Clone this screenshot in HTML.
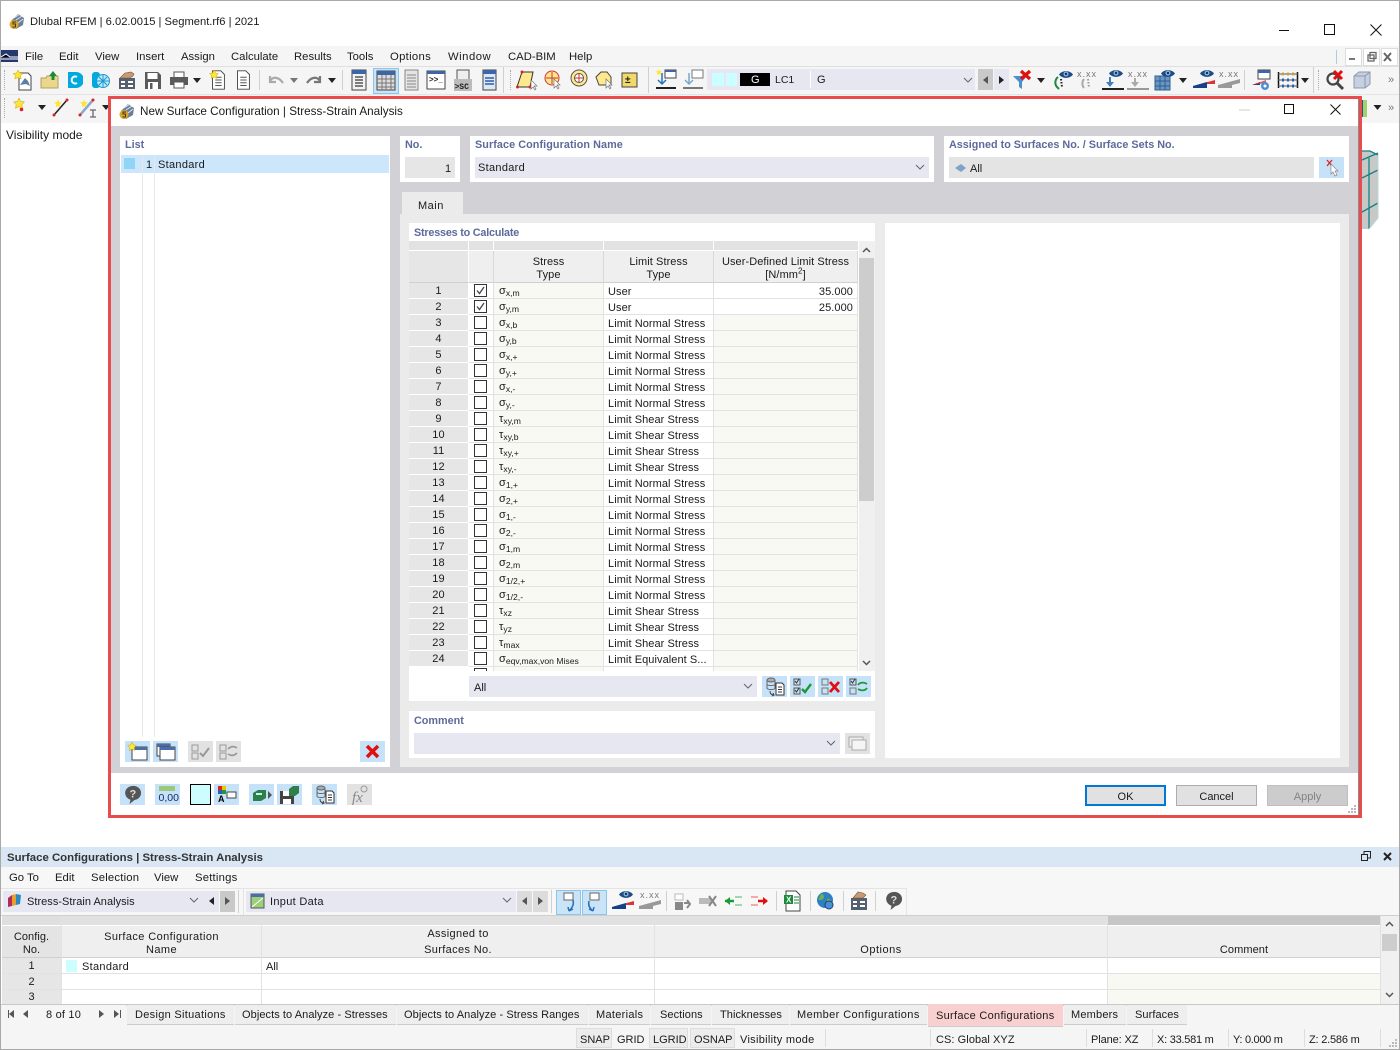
<!DOCTYPE html>
<html><head><meta charset="utf-8"><title>Dlubal RFEM</title>
<style>
html,body{margin:0;padding:0;background:#fff}
#p{position:relative;width:1400px;height:1050px;overflow:hidden;background:#fff;font:11.3px "Liberation Sans",sans-serif;color:#1a1a1a}
#p div,#p span.t,#p svg.i{position:absolute}
.t{white-space:nowrap;line-height:14px}
.lb{color:#5b6b9a;font-weight:bold;font-size:10.8px}
.sel{background:#e6e7f1}
.btn{background:#c6e2f8;width:25px;height:21px}
.dis{background:#e2e2e2;width:25px;height:21px}
.sep{width:1px;background:#d0d0d0}
.bx{background:#e1e1e1;border:1px solid #adadad;box-sizing:border-box;text-align:center;line-height:22px}
table{border-collapse:separate;border-spacing:0;table-layout:fixed;position:absolute}
td{padding:2px 0 0;height:13px;border-right:1px solid #e2e2e2;border-bottom:1px solid #e2e2e2;font-size:11px;line-height:13px;white-space:nowrap;overflow:hidden;letter-spacing:.07px;box-sizing:content-box}
td.n{background:#e6e6e6;text-align:center;border-right:1px solid #fff;border-bottom:1px solid #fff;padding-top:1px;height:14px;line-height:14px}
td.c{background:#fff;position:relative}
td.s{background:#f8f9f2;padding-left:5px}
td.l{background:#fff;padding-left:4px;padding-top:4px;height:11px;line-height:11px}
td.u{background:#f8f9f2;text-align:right;padding-right:4px;padding-top:4px;height:11px;line-height:11px}
td.w{background:#fff}
sub{font-size:8.6px;vertical-align:-2px;line-height:0;letter-spacing:0}
i.c{display:block;position:absolute;left:5px;top:1px;width:11px;height:11px;border:1px solid #333;background:#fff}
th{padding:4px 0 0;font-weight:normal;font-size:11px;line-height:13px;letter-spacing:.07px;background:#efefef;border-right:1px solid #d9d9d9;border-bottom:1px solid #d0d0d0;text-align:center;height:27px;box-sizing:content-box}
</style></head><body><div id="p">
<svg width="0" height="0" style="position:absolute"><defs>
<symbol id="logo" viewBox="0 0 18 18"><path d="M3 9l7-7 6 4-1 7-7 4z" fill="#6b7d98"/><path d="M6 6l6-4M8 8l6-4M10 11l5-4" stroke="#dfe6ee" stroke-width="1"/><circle cx="6" cy="12.5" r="4.5" fill="#d9a531"/><path d="M8 10H5v2h2.500v3H4.500" fill="none" stroke="#4a3a10" stroke-width="1"/></symbol>
<symbol id="tbl" viewBox="0 0 20 24"><rect x="3" y="2" width="14" height="20" fill="#f2f2f2" stroke="#444"/><rect x="3" y="2" width="14" height="4" fill="#3d66a8"/><path d="M6 9h8M6 12h8M6 15h8M6 18h8" stroke="#555" stroke-width="1.500"/></symbol>
<symbol id="doc" viewBox="0 0 20 24"><path d="M4 2h9l4 4v16H4z" fill="#fff" stroke="#444"/><path d="M7 9h7M7 12h7M7 15h7M7 18h7" stroke="#555"/></symbol>
<symbol id="eye" viewBox="0 0 14 9"><path d="M0 4.500C3 0 11 0 14 4.500 11 9 3 9 0 4.500z" fill="#1e4d86"/><circle cx="7" cy="4" r="2.500" fill="#8fb6dc"/><circle cx="7" cy="4" r="1.200" fill="#12305a"/></symbol>
<symbol id="ld" viewBox="0 0 26 24"><svg x="9" y="1" width="14" height="9"><use href="#eye"/></svg><path d="M10 9v8" stroke="#3d7fc0" stroke-width="2"/><path d="M6 14h8l-4 5z" fill="#3d7fc0"/><path d="M2 21h22" stroke="#222" stroke-width="2"/></symbol>
<symbol id="xxx" viewBox="0 0 26 24"><text x="3" y="9" font-size="9" letter-spacing="1" fill="#777" font-family="Liberation Sans">x.xx</text><path d="M10 10v7" stroke="#aaa" stroke-width="2"/><path d="M6 14h8l-4 5z" fill="#aaa"/><path d="M2 21h22" stroke="#999" stroke-width="2"/></symbol>
<symbol id="lm" viewBox="0 0 26 24"><svg x="9" y="1" width="14" height="9"><use href="#eye"/></svg><path d="M2 18l22-6v4H16z" fill="#d33"/><path d="M2 18l14-4v6H2z" fill="#15408a"/></symbol>
<symbol id="lx" viewBox="0 0 26 24"><text x="3" y="9" font-size="9" letter-spacing="1" fill="#777" font-family="Liberation Sans">x.xx</text><path d="M2 17l22-6v4l-8 2v3H2z" fill="#999"/></symbol>
<symbol id="cur" viewBox="0 0 26 24"><path d="M3 19L8 4h11l-3 15z" fill="#ffe98c" stroke="#333"/><circle cx="3.500" cy="19" r="1.500" fill="#d22"/><circle cx="16" cy="19" r="1.500" fill="#d22"/><circle cx="8" cy="4" r="1.500" fill="#d22"/><path d="M17 12l0 9 2-2 2 3 1-1-2-3h3z" fill="#fff" stroke="#777" stroke-width=".7"/></symbol>
<symbol id="dbdoc" viewBox="0 0 25 21"><ellipse cx="9" cy="4" rx="4" ry="2" fill="#aaa" stroke="#666"/><path d="M5 4v8c0 2 8 2 8 0V4M5 8c0 2 8 2 8 0" fill="none" stroke="#666"/><path d="M8 15c0 3 2 4 4 4l-1-2m1 2l-2 1" fill="none" stroke="#444"/><path d="M14 7h6l2 2v10h-8z" fill="#fff" stroke="#333"/><path d="M16 11h4M16 13.500h4M16 16h4" stroke="#333"/></symbol>
<symbol id="win" viewBox="0 0 25 21"><rect x="7" y="6" width="15" height="13" fill="#fff" stroke="#444"/><rect x="7" y="6" width="15" height="3" fill="#4a6fa8"/></symbol>
<symbol id="help" viewBox="0 0 25 21"><path d="M12.500 2a7.500 7 0 0 1 2 14l-5 4 1-4.300A7.500 7 0 0 1 12.500 2z" fill="#555"/><text x="9.500" y="13.500" font-size="11" font-weight="bold" fill="#ddd" font-family="Liberation Sans">?</text></symbol>
<symbol id="chv" viewBox="0 0 10 6"><path d="M1 1l4 4 4-4" fill="none" stroke="#666"/></symbol>
<symbol id="da" viewBox="0 0 8 5"><path d="M0 0h8L4 5z" fill="#222"/></symbol>
<symbol id="la" viewBox="0 0 5 8"><path d="M5 0v8L0 4z" fill="#222"/></symbol>
<symbol id="ra" viewBox="0 0 5 8"><path d="M0 0v8l5-4z" fill="#222"/></symbol>
</defs></svg>

<!-- window frame -->
<div style="left:0;top:0;width:1400px;height:1px;background:#a9a9a9"></div>
<div style="left:0;top:0;width:1px;height:1050px;background:#a9a9a9"></div>
<div style="left:1399px;top:0;width:1px;height:1050px;background:#a9a9a9"></div>
<div style="left:0;top:1049px;width:1400px;height:1px;background:#a9a9a9"></div>

<!-- title -->
<svg class="i" style="left:8px;top:12px" width="18" height="18"><use href="#logo"/></svg>
<span class="t" style="left:30px;top:15px;font-size:11.2px">Dlubal RFEM | 6.02.0015 | Segment.rf6 | 2021</span>
<svg class="i" style="left:1278px;top:24px" width="14" height="14"><path d="M1 6.500h10" stroke="#111"/></svg>
<svg class="i" style="left:1324px;top:24px" width="12" height="12"><rect x=".5" y=".5" width="10" height="10" fill="none" stroke="#111"/></svg>
<svg class="i" style="left:1370px;top:24px" width="12" height="12"><path d="M.5.500l11 11M11.500.500l-11 11" stroke="#111"/></svg>

<!-- menu -->
<div style="left:1px;top:46px;width:1398px;height:20px;background:#f5f5f5"></div>
<svg class="i" style="left:1px;top:50px" width="17" height="12"><rect width="17" height="12" fill="#24386e"/><path d="M0 7l5-3 4 3h8M0 9h17" stroke="#fff"/></svg>
<span class="t" style="left:25px;top:50px">File</span>
<span class="t" style="left:59px;top:50px">Edit</span>
<span class="t" style="left:95px;top:50px">View</span>
<span class="t" style="left:136px;top:50px">Insert</span>
<span class="t" style="left:181px;top:50px">Assign</span>
<span class="t" style="left:231px;top:50px">Calculate</span>
<span class="t" style="left:294px;top:50px">Results</span>
<span class="t" style="left:347px;top:50px">Tools</span>
<span class="t" style="left:390px;top:50px;letter-spacing:.3px">Options</span>
<span class="t" style="left:448px;top:50px;letter-spacing:.5px">Window</span>
<span class="t" style="left:508px;top:50px">CAD-BIM</span>
<span class="t" style="left:569px;top:50px">Help</span>
<div style="left:1336px;top:50px;width:1px;height:14px;background:#a7cdea"></div>
<div style="left:1345px;top:48px;width:15px;height:16px;background:#fff;border:1px solid #ddd"></div>
<div style="left:1363px;top:48px;width:15px;height:16px;background:#fff;border:1px solid #ddd"></div>
<div style="left:1381px;top:48px;width:15px;height:16px;background:#fff;border:1px solid #ddd"></div>
<svg class="i" style="left:1346px;top:49px" width="50" height="16"><path d="M3 10h6" stroke="#777" stroke-width="2"/><rect x="22" y="6" width="6" height="6" fill="none" stroke="#666" stroke-width="1.300"/><rect x="24" y="3.500" width="6" height="6" fill="none" stroke="#666" stroke-width="1.300"/><path d="M38 4l7 8M45 4l-7 8" stroke="#666" stroke-width="2"/></svg>

<!-- toolbar 1 -->
<div style="left:1px;top:66px;width:1398px;height:57px;background:#f5f5f5"></div>
<div style="left:1px;top:66px;width:1398px;height:1px;background:#e0e0e0"></div>
<div style="left:1px;top:94px;width:1398px;height:1px;background:#e4e4e4"></div>
<div style="left:4px;top:70px;width:1px;height:20px;border-left:1px dotted #aaa"></div>
<svg class="i" style="left:12px;top:69px" width="22" height="22"><path d="M7 4h9l3 3v14H7z" fill="#fff" stroke="#444"/><path d="M8 16l5-7 3 3 2 5-4-2z" fill="#5b7ea8"/><path d="M6 1l1.500 3 3.500.5-2.500 2 .7 3.500L6 8.500 2.800 10l.7-3.500L1 4.500 4.500 4z" fill="#ffe53a" stroke="#c9a800" stroke-width=".5"/></svg>
<svg class="i" style="left:40px;top:70px" width="20" height="20"><path d="M1 8h5l1-2h11v12H1z" fill="#e9d78e" stroke="#b5a15a"/><path d="M13 1l4 5h-2.500v4h-3V6H9z" fill="#1b8a3a"/></svg>
<svg class="i" style="left:65px;top:70px" width="18" height="20"><path d="M3 2h8a8 8 0 0 1 0 16H3z" fill="#00a9e0"/><path d="M12 7a3.500 3.500 0 1 0 0 6" fill="none" stroke="#fff" stroke-width="2"/></svg>
<svg class="i" style="left:91px;top:70px" width="20" height="20"><rect x="1" y="2" width="8" height="16" rx="3" fill="#00a9e0"/><circle cx="12" cy="11" r="6.500" fill="#bfe9f7" stroke="#1a9bd0"/><path d="M12 5v12M6 11h12M8 7l8 8M16 7l-8 8" stroke="#1a9bd0"/></svg>
<svg class="i" style="left:117px;top:70px" width="20" height="20"><rect x="2" y="8" width="16" height="11" fill="#55606e"/><path d="M4 12h4M11 12h5M4 16h4M11 16h5" stroke="#fff" stroke-width="2"/><path d="M3 8l5-5 6-1 3 2-1 2-3 2z" fill="#c79a74" stroke="#7a5a3a" stroke-width=".6"/></svg>
<svg class="i" style="left:144px;top:70px" width="18" height="20"><path d="M1 2h13l3 3v14H1z" fill="#5a5a5a"/><rect x="3.500" y="3" width="10" height="6" fill="#fff"/><rect x="4" y="12" width="10" height="7" fill="#fff"/><rect x="6" y="13" width="2.500" height="6" fill="#5a5a5a"/></svg>
<svg class="i" style="left:169px;top:71px" width="20" height="18"><rect x="5" y="1" width="10" height="6" fill="#fff" stroke="#555"/><rect x="1" y="6" width="18" height="8" fill="#5a5a5a"/><rect x="5" y="11" width="10" height="6" fill="#fff" stroke="#555"/></svg>
<svg class="i" style="left:193px;top:78px" width="8" height="5"><use href="#da"/></svg>
<svg class="i" style="left:208px;top:69px" width="20" height="22"><use href="#doc"/><path d="M6 1l1.500 3 3 .5-2 2 .5 3L6 8 3 9.500l.5-3-2-2 3-.5z" fill="#ffe53a" stroke="#c9a800" stroke-width=".5"/></svg>
<svg class="i" style="left:233px;top:69px" width="20" height="22"><use href="#doc"/></svg>
<div class="sep" style="left:259px;top:70px;height:20px"></div>
<svg class="i" style="left:267px;top:73px" width="18" height="14"><path d="M3 3v6h6M3 8c3-5 9-4 13 2" fill="none" stroke="#aaa" stroke-width="2.200"/></svg>
<svg class="i" style="left:290px;top:78px" width="8" height="5"><path d="M0 0h8L4 5z" fill="#777"/></svg>
<svg class="i" style="left:305px;top:73px" width="18" height="14"><path d="M15 3v6H9M15 8c-3-5-9-4-13 2" fill="none" stroke="#777" stroke-width="2.200"/></svg>
<svg class="i" style="left:328px;top:78px" width="8" height="5"><use href="#da"/></svg>
<div class="sep" style="left:342px;top:70px;height:20px"></div>
<svg class="i" style="left:349px;top:68px" width="20" height="24"><use href="#tbl"/></svg>
<div style="left:373px;top:68px;width:24px;height:24px;background:#c9e3f7;border:1px solid #8fc4ea"></div>
<svg class="i" style="left:376px;top:70px" width="20" height="22"><rect x="1" y="1" width="18" height="19" fill="#ddd" stroke="#444"/><rect x="1" y="1" width="18" height="4" fill="#3d66a8"/><path d="M1 9h18M1 13h18M1 17h18M6 5v15M10 5v15M15 5v15" stroke="#777"/></svg>
<svg class="i" style="left:401px;top:68px" width="20" height="24"><rect x="4" y="2" width="13" height="20" fill="#e4e4e4" stroke="#888"/><path d="M6 7h9M6 10h9M6 13h9M6 16h9M6 19h9" stroke="#888"/></svg>
<svg class="i" style="left:426px;top:70px" width="20" height="20"><rect x="1" y="1" width="18" height="18" fill="#fff" stroke="#444"/><rect x="1" y="1" width="18" height="3" fill="#3d66a8"/><text x="3" y="12" font-size="8" font-weight="bold" fill="#222" font-family="Liberation Sans">&gt;&gt;_</text></svg>
<svg class="i" style="left:453px;top:68px" width="20" height="24"><rect x="4" y="2" width="12" height="12" fill="#eee" stroke="#555"/><rect x="1" y="11" width="18" height="12" fill="#bbb"/><text x="1.500" y="21" font-size="8" font-weight="bold" fill="#222" font-family="Liberation Mono">&gt;SC</text></svg>
<svg class="i" style="left:479px;top:68px" width="20" height="24"><rect x="4" y="2" width="13" height="20" fill="#dce8f6" stroke="#444"/><rect x="4" y="2" width="13" height="4" fill="#3d66a8"/><path d="M6 10h9M6 13h9M6 16h9" stroke="#2a5fa8" stroke-width="1.500"/></svg>
<div class="sep" style="left:503px;top:67px;height:26px"></div>
<div style="left:510px;top:70px;width:1px;height:20px;border-left:1px dotted #aaa"></div>
<svg class="i" style="left:514px;top:68px" width="26" height="24"><use href="#cur"/></svg>
<svg class="i" style="left:542px;top:69px" width="22" height="22"><circle cx="10" cy="9" r="7" fill="#ffe98c" stroke="#c33"/><path d="M10 3v12M4 9h12" stroke="#c33"/><path d="M12 10l0 9 2-2 2 3 1-1-2-3h3z" fill="#fff" stroke="#777" stroke-width=".7"/></svg>
<svg class="i" style="left:568px;top:69px" width="22" height="22"><circle cx="11" cy="9" r="8" fill="#ffe98c" stroke="#555"/><circle cx="11" cy="9" r="4.500" fill="#fff" stroke="#555"/><path d="M11 5v8M7 9h8" stroke="#c33"/></svg>
<svg class="i" style="left:594px;top:69px" width="22" height="22"><path d="M2 8l5-5h6l4 5v8H5z" fill="#ffe98c" stroke="#444"/><path d="M12 10l0 9 2-2 2 3 1-1-2-3h3z" fill="#fff" stroke="#777" stroke-width=".7"/></svg>
<svg class="i" style="left:620px;top:71px" width="20" height="20"><rect x="2" y="2" width="15" height="14" fill="#f0d96a" stroke="#444"/><text x="5" y="12" font-size="10" font-weight="bold" fill="#222" font-family="Liberation Sans">±</text></svg>
<div class="sep" style="left:648px;top:67px;height:26px"></div>
<svg class="i" style="left:654px;top:68px" width="26" height="24"><rect x="11" y="2" width="11" height="8" fill="#fff" stroke="#444"/><rect x="11" y="2" width="11" height="2" fill="#3d66a8"/><path d="M8 5v11M4 12l4 4 4-4" fill="none" stroke="#2a6fb8" stroke-width="1.500"/><path d="M2 20h20" stroke="#222" stroke-width="2"/><path d="M5 1l1 2 2 .3-1.500 1.500.4 2L5 6 3 7l.4-2L2 3.300 4 3z" fill="#ffe53a"/></svg>
<svg class="i" style="left:681px;top:68px" width="26" height="24"><rect x="11" y="2" width="11" height="8" fill="#fff" stroke="#777"/><path d="M8 5v11M4 12l4 4 4-4" fill="none" stroke="#7aa6d0" stroke-width="1.500"/><path d="M2 20h20" stroke="#777" stroke-width="2"/></svg>
<div class="sel" style="left:707px;top:69px;width:268px;height:21px"></div>
<div style="left:712px;top:73px;width:12px;height:13px;background:#ccfeff"></div>
<div style="left:726px;top:73px;width:11px;height:13px;background:#ccfeff"></div>
<div style="left:740px;top:73px;width:30px;height:13px;background:#000"></div>
<span class="t" style="left:751px;top:73px;color:#fff;font-size:11px">G</span>
<span class="t" style="left:775px;top:73px;font-size:10.5px">LC1</span>
<div style="left:810px;top:71px;width:1px;height:17px;background:#fff"></div>
<span class="t" style="left:817px;top:73px;font-size:11px">G</span>
<svg class="i" style="left:963px;top:77px" width="10" height="6"><use href="#chv"/></svg>
<div style="left:978px;top:69px;width:15px;height:21px;background:#c9c9c9"></div>
<div style="left:994px;top:69px;width:15px;height:21px;background:#e6e7f1"></div>
<svg class="i" style="left:983px;top:76px" width="5" height="8"><path d="M5 0v8L0 4z" fill="#555"/></svg>
<svg class="i" style="left:999px;top:76px" width="5" height="8"><use href="#ra"/></svg>
<svg class="i" style="left:1012px;top:69px" width="22" height="22"><path d="M1 7h14l-5 6v7l-3-2v-5z" fill="#4a90cf"/><path d="M9 2l9 8M18 2l-9 8" stroke="#e01010" stroke-width="3.200"/></svg>
<svg class="i" style="left:1037px;top:78px" width="8" height="5"><use href="#da"/></svg>
<svg class="i" style="left:1050px;top:68px" width="24" height="24"><svg x="9" y="2" width="14" height="9"><use href="#eye"/></svg><path d="M8 9a7 7 0 0 0-1 10l2 2" fill="none" stroke="#1b8a3a" stroke-width="2"/><path d="M11 11l1 8" stroke="#222" stroke-dasharray="1.500 1.500" stroke-width="2"/></svg>
<svg class="i" style="left:1075px;top:68px" width="26" height="24"><text x="2" y="9" font-size="9" letter-spacing="1" fill="#777" font-family="Liberation Sans">x.xx</text><path d="M9 11a7 7 0 0 0 0 9" fill="none" stroke="#aaa" stroke-width="2"/><path d="M13 11l1 9" stroke="#999" stroke-dasharray="1.500 1.500" stroke-width="2"/></svg>
<svg class="i" style="left:1100px;top:68px" width="26" height="24"><use href="#ld"/></svg>
<svg class="i" style="left:1125px;top:68px" width="26" height="24"><use href="#xxx"/></svg>
<svg class="i" style="left:1152px;top:68px" width="24" height="24"><rect x="3" y="8" width="15" height="14" fill="#6a96c4" stroke="#2f5f90"/><path d="M3 13h15M3 18h15M8 8v14M13 8v14" stroke="#2f5f90"/><svg x="9" y="1" width="14" height="9"><use href="#eye"/></svg></svg>
<svg class="i" style="left:1179px;top:78px" width="8" height="5"><use href="#da"/></svg>
<svg class="i" style="left:1191px;top:68px" width="26" height="24"><use href="#lm"/></svg>
<svg class="i" style="left:1216px;top:68px" width="26" height="24"><use href="#lx"/></svg>
<div class="sep" style="left:1244px;top:70px;height:20px"></div>
<svg class="i" style="left:1250px;top:68px" width="24" height="24"><rect x="8" y="2" width="12" height="9" fill="#fff" stroke="#444"/><rect x="8" y="2" width="12" height="3" fill="#3d66a8"/><path d="M2 17l8-3v3z" fill="#15408a"/><path d="M2 17l14-5v3z" fill="#d33" opacity=".8"/><circle cx="15" cy="18" r="4" fill="#4a90d9"/><circle cx="15" cy="18" r="1.500" fill="#fff"/></svg>
<svg class="i" style="left:1277px;top:70px" width="24" height="20"><path d="M1.500 2v16M20.500 2v16" stroke="#111" stroke-width="1.500"/><path d="M1 4h20M1 10h20M1 16h20" stroke="#555"/><path d="M5 4h2M10 4h2M15 4h2" stroke="#c9a23a" stroke-width="3"/><path d="M5 10h2M10 10h2M15 10h2M5 16h2M10 16h2M15 16h2" stroke="#2a5fb8" stroke-width="3"/></svg>
<svg class="i" style="left:1301px;top:78px" width="8" height="5"><use href="#da"/></svg>
<div class="sep" style="left:1313px;top:67px;height:26px"></div>
<div style="left:1318px;top:70px;width:1px;height:20px;border-left:1px dotted #aaa"></div>
<svg class="i" style="left:1325px;top:69px" width="22" height="22"><circle cx="8" cy="10" r="5.500" fill="none" stroke="#444" stroke-width="2.200"/><path d="M12 14l6 6" stroke="#444" stroke-width="3"/><path d="M9 2l8 8M17 2l-8 8" stroke="#e01010" stroke-width="3"/></svg>
<svg class="i" style="left:1352px;top:70px" width="20" height="20"><path d="M2 6l5-4h11v12l-5 4H2z" fill="#c6d0e0" stroke="#8a9ab0"/><path d="M2 6h11v12M13 6l5-4" fill="none" stroke="#8a9ab0"/></svg>
<span class="t" style="left:1388px;top:73px;color:#777;font-size:11px">»</span>

<!-- toolbar 2 -->
<div style="left:4px;top:98px;width:1px;height:20px;border-left:1px dotted #aaa"></div>
<svg class="i" style="left:12px;top:97px" width="16" height="18"><path d="M7 1l1.700 3.500 3.800.5-2.700 2.600.7 3.800L7 9.600l-3.500 1.800.7-3.800L1.500 5l3.800-.5z" fill="#ffe53a" stroke="#b89a00" stroke-width=".5"/><circle cx="9.500" cy="12.500" r="1.800" fill="#d22"/></svg>
<svg class="i" style="left:38px;top:105px" width="8" height="5"><use href="#da"/></svg>
<svg class="i" style="left:51px;top:97px" width="20" height="20"><path d="M3 18L16 3" stroke="#222" stroke-width="1.500"/><circle cx="3" cy="18" r="1.500" fill="#d22"/><circle cx="16" cy="3" r="1.500" fill="#d22"/><path d="M7 2l1 3 3 .4-2.300 2 .6 3L7 9l-2.300 1.400.6-3L3 5.400 6 5z" fill="#ffe53a"/></svg>
<svg class="i" style="left:77px;top:97px" width="22" height="22"><path d="M3 18L16 3" stroke="#8aa8c8" stroke-width="2.500"/><circle cx="3" cy="18" r="1.500" fill="#d22"/><circle cx="16" cy="3" r="1.500" fill="#d22"/><path d="M7 2l1 3 3 .4-2.300 2 .6 3L7 9l-2.300 1.400.6-3L3 5.400 6 5z" fill="#ffe53a"/><path d="M13 13h6M16 13v7M13 20h6" stroke="#667" stroke-width="1.300"/></svg>
<svg class="i" style="left:102px;top:105px" width="8" height="5"><use href="#da"/></svg>
<span class="t" style="left:6px;top:128px;font-size:12px">Visibility mode</span>
<div style="left:1361px;top:100px;width:6px;height:17px;background:#9ed46a;border-left:2px solid #2f4f90;box-sizing:border-box"></div>
<svg class="i" style="left:1373px;top:105px" width="9" height="5"><use href="#da"/></svg>
<span class="t" style="left:1388px;top:101px;color:#777;font-size:11px">»</span>

<!-- 3D model piece -->
<svg class="i" style="left:1362px;top:150px" width="20" height="82"><path d="M0 1h8l8 4v63L7 79H0z" fill="#c7c9c9"/><path d="M0 1h8l8 4M0 10l16-7M0 28l16-8M0 62l16-9M7 8v71" fill="none" stroke="#16807f" stroke-width="1.300"/><path d="M16 5v63L7 79" fill="none" stroke="#b9d6d6"/></svg>

<!-- Dialog -->
<div style="left:108px;top:96px;width:1254px;height:722px;box-sizing:border-box;border:3px solid #e84c4c;background:#fff"></div>
<div style="left:1358px;top:99px;width:1px;height:716px;background:#8a8a8a"></div>
<svg class="i" style="left:118px;top:102px" width="18" height="18"><use href="#logo"/></svg>
<span class="t" style="left:140px;top:105px;font-size:11.7px">New Surface Configuration | Stress-Strain Analysis</span>
<svg class="i" style="left:1239px;top:108px" width="12" height="4"><path d="M0 2h11" stroke="#ccc"/></svg>
<svg class="i" style="left:1284px;top:104px" width="11" height="11"><rect x=".5" y=".5" width="9" height="9" fill="none" stroke="#111"/></svg>
<svg class="i" style="left:1330px;top:104px" width="11" height="11"><path d="M.5.500l10 10M10.500.500l-10 10" stroke="#111"/></svg>
<div style="left:111px;top:126px;width:1247px;height:647px;background:#d1d1d6"></div>

<!-- List panel -->
<div style="left:120px;top:136px;width:270px;height:631px;background:#fff"></div>
<span class="t lb" style="left:125px;top:138px">List</span>
<div style="left:121px;top:155px;width:268px;height:18px;background:#cce6fb"></div>
<div style="left:124px;top:158px;width:11px;height:11px;background:#90d5f5"></div>
<div style="left:142px;top:155px;width:1px;height:582px;background:#e8e8e8"></div>
<div style="left:154px;top:155px;width:1px;height:582px;background:#e8e8e8"></div>
<span class="t" style="left:146px;top:158px;font-size:11px">1</span>
<span class="t" style="left:158px;top:158px;font-size:11px;letter-spacing:.3px">Standard</span>
<div class="btn" style="left:125px;top:741px"></div>
<svg class="i" style="left:125px;top:741px" width="25" height="21"><use href="#win"/><path d="M7 1l1.500 3 3 .4-2.200 2.200.5 3L7 8.200 4.300 9.600l.5-3L2.500 4.400l3-.4z" fill="#ffe53a" stroke="#b89a00" stroke-width=".4"/></svg>
<div class="btn" style="left:153px;top:741px"></div>
<svg class="i" style="left:153px;top:741px" width="25" height="21"><rect x="4" y="3" width="13" height="12" fill="#fff" stroke="#444"/><rect x="4" y="3" width="13" height="3" fill="#4a6fa8"/><use href="#win"/></svg>
<div class="dis" style="left:188px;top:741px"></div>
<svg class="i" style="left:188px;top:741px" width="25" height="21"><rect x="4" y="4" width="6" height="6" fill="none" stroke="#999"/><rect x="4" y="12" width="6" height="6" fill="none" stroke="#999"/><path d="M12 12l3 3 6-8" fill="none" stroke="#999" stroke-width="2"/></svg>
<div class="dis" style="left:216px;top:741px"></div>
<svg class="i" style="left:216px;top:741px" width="25" height="21"><rect x="4" y="4" width="6" height="6" fill="none" stroke="#999"/><rect x="4" y="12" width="6" height="6" fill="none" stroke="#999"/><path d="M12 8c3-3 6-3 9-1M21 12c-3 3-6 3-9 1" fill="none" stroke="#999" stroke-width="1.600"/></svg>
<div class="btn" style="left:360px;top:741px"></div>
<svg class="i" style="left:360px;top:741px" width="25" height="21"><path d="M7 5l11 11M18 5L7 16" stroke="#e01010" stroke-width="3.500"/></svg>

<!-- No -->
<div style="left:400px;top:136px;width:60px;height:46px;background:#fff"></div>
<span class="t lb" style="left:405px;top:138px">No.</span>
<div style="left:405px;top:157px;width:50px;height:21px;background:#e6e6e6"></div>
<span class="t" style="left:445px;top:162px;font-size:11px">1</span>
<!-- Name -->
<div style="left:470px;top:136px;width:464px;height:46px;background:#fff"></div>
<span class="t lb" style="left:475px;top:138px;letter-spacing:.08px">Surface Configuration Name</span>
<div class="sel" style="left:475px;top:157px;width:454px;height:21px"></div>
<span class="t" style="left:478px;top:161px;font-size:11px;letter-spacing:.3px">Standard</span>
<svg class="i" style="left:915px;top:164px" width="10" height="6"><use href="#chv"/></svg>
<!-- Assigned -->
<div style="left:944px;top:136px;width:405px;height:46px;background:#fff"></div>
<span class="t lb" style="left:949px;top:138px">Assigned to Surfaces No. / Surface Sets No.</span>
<div style="left:949px;top:157px;width:365px;height:21px;background:#e4e4e4"></div>
<svg class="i" style="left:954px;top:163px" width="13" height="10"><path d="M1 5l6-4 5 4-5 4z" fill="#7da4c8"/></svg>
<span class="t" style="left:970px;top:162px;font-size:11px">All</span>
<div class="btn" style="left:1319px;top:157px"></div>
<svg class="i" style="left:1319px;top:157px" width="25" height="21"><path d="M8 3l5 6M13 3L8 9" stroke="#d22" stroke-width="1.300"/><path d="M12 7v10l2-2 2 4 2-1-2-4h3z" fill="#fff" stroke="#888" stroke-width=".7"/></svg>

<!-- Main tab area -->
<div style="left:402px;top:192px;width:61px;height:22px;background:#ebebeb"></div>
<span class="t" style="left:418px;top:199px;font-size:11px;letter-spacing:.5px">Main</span>
<div style="left:400px;top:214px;width:949px;height:553px;background:#ebebeb"></div>

<!-- Stress panel -->
<div style="left:409px;top:223px;width:466px;height:478px;background:#fff"></div>
<span class="t lb" style="left:414px;top:226px;letter-spacing:-.2px">Stresses to Calculate</span>
<div style="left:409px;top:241px;width:449px;height:430px;overflow:hidden">
<div style="left:0;top:0;width:59px;height:9px;background:#e2e2e2"></div>
<div style="left:60px;top:0;width:24px;height:9px;background:#e2e2e2"></div>
<div style="left:85px;top:0;width:109px;height:9px;background:#e2e2e2"></div>
<div style="left:195px;top:0;width:109px;height:9px;background:#e2e2e2"></div>
<div style="left:305px;top:0;width:144px;height:9px;background:#e2e2e2"></div>
<table style="left:0;top:10px;width:449px">
<colgroup><col style="width:60px"><col style="width:25px"><col style="width:110px"><col style="width:110px"><col style="width:144px"></colgroup>
<tr><th style="background:#e6e6e6;border-right:1px solid #fff"></th><th></th><th>Stress<br>Type</th><th>Limit Stress<br>Type</th><th>User-Defined Limit Stress<br>[N/mm<sup style="font-size:8px;line-height:0">2</sup>]</th></tr>
<tr><td class="n">1</td><td class="c"><i class="c"><svg width="11" height="11" style="display:block"><path d="M2 5.500l2.500 3L9 2" fill="none" stroke="#444" stroke-width="1.300"/></svg></i></td><td class="s">σ<sub>x,m</sub></td><td class="l">User</td><td class="u" style="background:#fff">35.000</td></tr>
<tr><td class="n">2</td><td class="c"><i class="c"><svg width="11" height="11" style="display:block"><path d="M2 5.500l2.500 3L9 2" fill="none" stroke="#444" stroke-width="1.300"/></svg></i></td><td class="s">σ<sub>y,m</sub></td><td class="l">User</td><td class="u" style="background:#fff">25.000</td></tr>
<tr><td class="n">3</td><td class="c"><i class="c"></i></td><td class="s">σ<sub>x,b</sub></td><td class="l">Limit Normal Stress</td><td class="u"></td></tr>
<tr><td class="n">4</td><td class="c"><i class="c"></i></td><td class="s">σ<sub>y,b</sub></td><td class="l">Limit Normal Stress</td><td class="u"></td></tr>
<tr><td class="n">5</td><td class="c"><i class="c"></i></td><td class="s">σ<sub>x,+</sub></td><td class="l">Limit Normal Stress</td><td class="u"></td></tr>
<tr><td class="n">6</td><td class="c"><i class="c"></i></td><td class="s">σ<sub>y,+</sub></td><td class="l">Limit Normal Stress</td><td class="u"></td></tr>
<tr><td class="n">7</td><td class="c"><i class="c"></i></td><td class="s">σ<sub>x,-</sub></td><td class="l">Limit Normal Stress</td><td class="u"></td></tr>
<tr><td class="n">8</td><td class="c"><i class="c"></i></td><td class="s">σ<sub>y,-</sub></td><td class="l">Limit Normal Stress</td><td class="u"></td></tr>
<tr><td class="n">9</td><td class="c"><i class="c"></i></td><td class="s">τ<sub>xy,m</sub></td><td class="l">Limit Shear Stress</td><td class="u"></td></tr>
<tr><td class="n">10</td><td class="c"><i class="c"></i></td><td class="s">τ<sub>xy,b</sub></td><td class="l">Limit Shear Stress</td><td class="u"></td></tr>
<tr><td class="n">11</td><td class="c"><i class="c"></i></td><td class="s">τ<sub>xy,+</sub></td><td class="l">Limit Shear Stress</td><td class="u"></td></tr>
<tr><td class="n">12</td><td class="c"><i class="c"></i></td><td class="s">τ<sub>xy,-</sub></td><td class="l">Limit Shear Stress</td><td class="u"></td></tr>
<tr><td class="n">13</td><td class="c"><i class="c"></i></td><td class="s">σ<sub>1,+</sub></td><td class="l">Limit Normal Stress</td><td class="u"></td></tr>
<tr><td class="n">14</td><td class="c"><i class="c"></i></td><td class="s">σ<sub>2,+</sub></td><td class="l">Limit Normal Stress</td><td class="u"></td></tr>
<tr><td class="n">15</td><td class="c"><i class="c"></i></td><td class="s">σ<sub>1,-</sub></td><td class="l">Limit Normal Stress</td><td class="u"></td></tr>
<tr><td class="n">16</td><td class="c"><i class="c"></i></td><td class="s">σ<sub>2,-</sub></td><td class="l">Limit Normal Stress</td><td class="u"></td></tr>
<tr><td class="n">17</td><td class="c"><i class="c"></i></td><td class="s">σ<sub>1,m</sub></td><td class="l">Limit Normal Stress</td><td class="u"></td></tr>
<tr><td class="n">18</td><td class="c"><i class="c"></i></td><td class="s">σ<sub>2,m</sub></td><td class="l">Limit Normal Stress</td><td class="u"></td></tr>
<tr><td class="n">19</td><td class="c"><i class="c"></i></td><td class="s">σ<sub>1/2,+</sub></td><td class="l">Limit Normal Stress</td><td class="u"></td></tr>
<tr><td class="n">20</td><td class="c"><i class="c"></i></td><td class="s">σ<sub>1/2,-</sub></td><td class="l">Limit Normal Stress</td><td class="u"></td></tr>
<tr><td class="n">21</td><td class="c"><i class="c"></i></td><td class="s">τ<sub>xz</sub></td><td class="l">Limit Shear Stress</td><td class="u"></td></tr>
<tr><td class="n">22</td><td class="c"><i class="c"></i></td><td class="s">τ<sub>yz</sub></td><td class="l">Limit Shear Stress</td><td class="u"></td></tr>
<tr><td class="n">23</td><td class="c"><i class="c"></i></td><td class="s">τ<sub>max</sub></td><td class="l">Limit Shear Stress</td><td class="u"></td></tr>
<tr><td class="n">24</td><td class="c"><i class="c"></i></td><td class="s">σ<sub>eqv,max,von Mises</sub></td><td class="l">Limit Equivalent S...</td><td class="u"></td></tr>
<tr><td class="w" style="border:0"></td><td class="c" style="border-right:1px solid #e2e2e2"><i class="c"></i></td><td class="s"></td><td class="l"></td><td class="u"></td></tr>
</table>
</div>
<!-- scrollbar -->
<div style="left:859px;top:241px;width:16px;height:430px;background:#f0f0f0"></div>
<div style="left:859px;top:258px;width:15px;height:243px;background:#cdcdcd"></div>
<svg class="i" style="left:862px;top:247px" width="9" height="6"><path d="M1 5l3.500-3.500L8 5" fill="none" stroke="#555" stroke-width="1.500"/></svg>
<svg class="i" style="left:862px;top:660px" width="9" height="6"><path d="M1 1l3.500 3.500L8 1" fill="none" stroke="#555" stroke-width="1.500"/></svg>

<div class="sel" style="left:469px;top:676px;width:288px;height:21px"></div>
<span class="t" style="left:474px;top:681px;font-size:11px">All</span>
<svg class="i" style="left:743px;top:683px" width="10" height="6"><use href="#chv"/></svg>
<div class="btn" style="left:762px;top:676px"></div>
<svg class="i" style="left:762px;top:676px" width="25" height="21"><use href="#dbdoc"/></svg>
<div class="btn" style="left:790px;top:676px"></div>
<svg class="i" style="left:790px;top:676px" width="25" height="21"><rect x="4" y="3" width="6" height="6" fill="none" stroke="#555"/><rect x="4" y="12" width="6" height="6" fill="none" stroke="#555"/><path d="M5 5l1.500 2L9 3M5 14l1.500 2L9 12" fill="none" stroke="#333"/><path d="M12 13l3 3 6-8" fill="none" stroke="#1b9a3a" stroke-width="2.400"/></svg>
<div class="btn" style="left:818px;top:676px"></div>
<svg class="i" style="left:818px;top:676px" width="25" height="21"><rect x="4" y="3" width="6" height="6" fill="none" stroke="#777"/><rect x="4" y="12" width="6" height="6" fill="none" stroke="#777"/><path d="M12 6l9 10M21 6l-9 10" stroke="#e01010" stroke-width="2.800"/></svg>
<div class="btn" style="left:846px;top:676px"></div>
<svg class="i" style="left:846px;top:676px" width="25" height="21"><rect x="4" y="3" width="6" height="6" fill="none" stroke="#555"/><rect x="4" y="12" width="6" height="6" fill="none" stroke="#777"/><path d="M5 5l1.500 2L9 3" fill="none" stroke="#333"/><path d="M12 9c2-3 6-3 9-1M21 12c-2 3-6 3-9 1" fill="none" stroke="#1b9a3a" stroke-width="1.800"/></svg>

<!-- Comment -->
<div style="left:409px;top:711px;width:466px;height:47px;background:#fff"></div>
<span class="t lb" style="left:414px;top:714px">Comment</span>
<div class="sel" style="left:414px;top:733px;width:426px;height:21px"></div>
<svg class="i" style="left:826px;top:740px" width="10" height="6"><use href="#chv"/></svg>
<div class="dis" style="left:845px;top:733px"></div>
<svg class="i" style="left:845px;top:733px" width="25" height="21"><rect x="4" y="4" width="14" height="10" fill="#eee" stroke="#aaa"/><rect x="7" y="7" width="14" height="10" fill="#f5f5f5" stroke="#aaa"/></svg>

<!-- right panel -->
<div style="left:885px;top:223px;width:455px;height:535px;background:#fff"></div>

<!-- bottom bar dialog -->
<div class="btn" style="left:120px;top:784px"></div>
<svg class="i" style="left:120px;top:784px" width="25" height="21"><use href="#help"/></svg>
<div class="btn" style="left:155px;top:784px"></div>
<svg class="i" style="left:155px;top:784px" width="25" height="21"><rect x="4" y="2" width="16" height="5" fill="#9cc87a"/><text x="3.500" y="17" font-size="10.5" fill="#1a2a6a" font-family="Liberation Sans">0,00</text></svg>
<div style="left:190px;top:784px;width:21px;height:21px;box-sizing:border-box;border:1px solid #000;background:#ccfeff"></div>
<div class="btn" style="left:214px;top:784px"></div>
<svg class="i" style="left:214px;top:784px" width="25" height="21"><rect x="4" y="2" width="4" height="4" fill="#d22"/><rect x="8" y="2" width="4" height="4" fill="#e6c800"/><rect x="4" y="6" width="4" height="4" fill="#2a5fb8"/><rect x="8" y="6" width="4" height="4" fill="#1b9a3a"/><rect x="13" y="8" width="9" height="6" fill="#fff" stroke="#444"/><text x="4" y="18" font-size="9" font-weight="bold" font-family="Liberation Sans">A</text></svg>
<div class="btn" style="left:249px;top:784px"></div>
<svg class="i" style="left:249px;top:784px" width="25" height="21"><path d="M4 9l5-3h8v8l-5 3H4z" fill="#2f7f4a"/><path d="M19 7l4 4-4 4z" fill="#555"/><path d="M7 10h6" stroke="#bfe" stroke-width="2"/></svg>
<div class="btn" style="left:277px;top:784px"></div>
<svg class="i" style="left:277px;top:784px" width="25" height="21"><path d="M3 7h14v13H3z" fill="#444"/><rect x="6" y="7" width="8" height="5" fill="#fff"/><rect x="6" y="15" width="8" height="5" fill="#fff"/><path d="M12 5l4-3h6v7l-4 3h-6z" fill="#2f7f4a"/></svg>
<div class="btn" style="left:312px;top:784px"></div>
<svg class="i" style="left:312px;top:784px" width="25" height="21"><use href="#dbdoc"/></svg>
<div class="dis" style="left:347px;top:784px"></div>
<svg class="i" style="left:347px;top:784px" width="25" height="21"><text x="5" y="18" font-size="15" font-style="italic" fill="#888" font-family="Liberation Serif">fx</text><circle cx="17" cy="5" r="3" fill="none" stroke="#999"/></svg>
<div class="bx" style="left:1085px;top:785px;width:81px;height:21px;border:2px solid #0078d7;line-height:21px;font-size:11px">OK</div>
<div class="bx" style="left:1176px;top:785px;width:81px;height:21px;font-size:11px">Cancel</div>
<div class="bx" style="left:1267px;top:785px;width:81px;height:21px;background:#ccc;border-color:#bfbfbf;color:#838383;font-size:11px">Apply</div>
<svg class="i" style="left:1347px;top:804px" width="10" height="10"><path d="M7 1h2v2H7zM4 4h2v2H4zM7 4h2v2H7zM1 7h2v2H1zM4 7h2v2H4zM7 7h2v2H7z" fill="#bbb"/></svg>

<!-- Lower panel -->
<div style="left:1px;top:847px;width:1398px;height:20px;background:#d9e6f3"></div>
<span class="t" style="left:7px;top:851px;font-weight:bold;font-size:11.4px;color:#333">Surface Configurations | Stress-Strain Analysis</span>
<svg class="i" style="left:1361px;top:851px" width="10" height="10"><rect x=".5" y="3.500" width="6" height="6" fill="#d9e6f3" stroke="#222"/><path d="M3 3V.500h6.500V7H7" fill="none" stroke="#222"/></svg>
<svg class="i" style="left:1383px;top:852px" width="9" height="9"><path d="M1 1l7 7M8 1L1 8" stroke="#222" stroke-width="2"/></svg>
<div style="left:1px;top:867px;width:1398px;height:48px;background:#f7f7f7"></div>
<span class="t" style="left:9px;top:871px">Go To</span>
<span class="t" style="left:55px;top:871px">Edit</span>
<span class="t" style="left:91px;top:871px;letter-spacing:.2px">Selection</span>
<span class="t" style="left:154px;top:871px">View</span>
<span class="t" style="left:195px;top:871px;letter-spacing:.2px">Settings</span>
<div style="left:1px;top:888px;width:905px;height:1px;background:#e4e4e4"></div>
<div style="left:906px;top:888px;width:1px;height:27px;background:#e4e4e4"></div>
<div class="sel" style="left:3px;top:891px;width:201px;height:21px"></div>
<svg class="i" style="left:7px;top:893px" width="16" height="16"><path d="M1 5l4-3v11l-4 1z" fill="#b02a5a"/><path d="M5 2l4-1v11l-4 1z" fill="#e6a030"/><path d="M9 1l5 1-1 9-4 1z" fill="#2a8ac0"/></svg>
<span class="t" style="left:27px;top:895px;font-size:11px;letter-spacing:.03px">Stress-Strain Analysis</span>
<svg class="i" style="left:189px;top:897px" width="10" height="6"><use href="#chv"/></svg>
<div style="left:204px;top:891px;width:15px;height:21px;background:#e6e7f1"></div>
<div style="left:220px;top:891px;width:15px;height:21px;background:#c9c9c9"></div>
<svg class="i" style="left:209px;top:897px" width="5" height="8"><use href="#la"/></svg>
<svg class="i" style="left:225px;top:897px" width="5" height="8"><path d="M0 0v8l5-4z" fill="#555"/></svg>
<div class="sep" style="left:238px;top:890px;height:23px"></div>
<div style="left:243px;top:889px;width:1px;height:26px;background:#e4e4e4"></div>
<div class="sel" style="left:246px;top:891px;width:270px;height:21px"></div>
<svg class="i" style="left:250px;top:893px" width="16" height="16"><rect x="1" y="1" width="13" height="14" fill="#9ccf7a" stroke="#555"/><rect x="1" y="1" width="13" height="3" fill="#4a6fa8"/><path d="M2 14L13 5" stroke="#fff"/></svg>
<span class="t" style="left:270px;top:895px;font-size:11px;letter-spacing:.3px">Input Data</span>
<svg class="i" style="left:502px;top:897px" width="10" height="6"><use href="#chv"/></svg>
<div style="left:517px;top:891px;width:15px;height:21px;background:#dcdcdc"></div>
<div style="left:533px;top:891px;width:15px;height:21px;background:#dcdcdc"></div>
<svg class="i" style="left:522px;top:897px" width="5" height="8"><path d="M5 0v8L0 4z" fill="#555"/></svg>
<svg class="i" style="left:538px;top:897px" width="5" height="8"><path d="M0 0v8l5-4z" fill="#555"/></svg>
<div class="sep" style="left:551px;top:890px;height:23px"></div>
<div style="left:556px;top:890px;width:23px;height:23px;background:#c9e3f7;border:1px solid #8fc4ea"></div>
<div style="left:582px;top:890px;width:23px;height:23px;background:#c9e3f7;border:1px solid #8fc4ea"></div>
<svg class="i" style="left:557px;top:891px" width="24" height="24"><rect x="7" y="2" width="9" height="7" fill="#fff" stroke="#666"/><path d="M16 9c1 4 0 7-4 11m0 0l-1-4m1 4l4-2" fill="none" stroke="#2a6fb8" stroke-width="1.500"/></svg>
<svg class="i" style="left:583px;top:891px" width="24" height="24"><rect x="7" y="2" width="9" height="7" fill="#fff" stroke="#666"/><path d="M6 10c-1 4 0 7 4 10m0 0l1-4m-1 4l-4-2" fill="none" stroke="#2a6fb8" stroke-width="1.500"/></svg>
<svg class="i" style="left:610px;top:889px" width="26" height="24"><use href="#lm"/></svg>
<svg class="i" style="left:637px;top:889px" width="26" height="24"><use href="#lx"/></svg>
<div class="sep" style="left:666px;top:891px;height:20px"></div>
<svg class="i" style="left:673px;top:891px" width="20" height="22"><rect x="2" y="3" width="8" height="6" fill="#fff" stroke="#bbb"/><rect x="2" y="11" width="8" height="8" fill="#888"/><path d="M11 12h5M14 9l3 4-3 4" fill="none" stroke="#888" stroke-width="2"/></svg>
<svg class="i" style="left:698px;top:892px" width="20" height="18"><rect x="1" y="6" width="12" height="6" fill="#bbb"/><path d="M11 4l7 10M18 4l-7 10" stroke="#888" stroke-width="2"/></svg>
<svg class="i" style="left:724px;top:892px" width="20" height="18"><path d="M1 9h9" stroke="#1b9a3a" stroke-width="2.500"/><path d="M6 5L1 9l5 4z" fill="#1b9a3a"/><path d="M11 5h7M11 13h7" stroke="#9fd8b0" stroke-width="2"/></svg>
<svg class="i" style="left:750px;top:892px" width="20" height="18"><path d="M8 9h9" stroke="#e01010" stroke-width="2.500"/><path d="M13 5l5 4-5 4z" fill="#e01010"/><path d="M1 5h7M1 13h7" stroke="#f4aaaa" stroke-width="2"/></svg>
<div class="sep" style="left:776px;top:891px;height:20px"></div>
<svg class="i" style="left:783px;top:890px" width="20" height="22"><path d="M3 1h10l4 4v16H3z" fill="#fff" stroke="#444"/><rect x="1" y="5" width="9" height="9" fill="#1b8a3a"/><path d="M11 7h5M11 10h5M11 13h5" stroke="#1b8a3a"/><text x="3" y="12.500" font-size="8" font-weight="bold" fill="#fff" font-family="Liberation Sans">X</text></svg>
<div class="sep" style="left:810px;top:891px;height:20px"></div>
<svg class="i" style="left:816px;top:890px" width="20" height="22"><circle cx="9" cy="10" r="8" fill="#2f7fc4"/><path d="M5 4c3 0 4 3 2 5s-4 0-5 1M11 9c3-1 5 2 4 5s-4 1-4-1" fill="#6eb24a"/><circle cx="13" cy="15" r="4" fill="#4a90d9" stroke="#246"/></svg>
<div class="sep" style="left:843px;top:891px;height:20px"></div>
<svg class="i" style="left:849px;top:890px" width="20" height="22"><rect x="2" y="8" width="16" height="12" fill="#55606e"/><path d="M4 12h4M11 12h5M4 16h4M11 16h5" stroke="#fff" stroke-width="2"/><path d="M4 8l5-6 5 1 3 2-3 3z" fill="#c79a74" stroke="#7a5a3a" stroke-width=".6"/></svg>
<div class="sep" style="left:875px;top:891px;height:20px"></div>
<svg class="i" style="left:881px;top:890px" width="25" height="21"><use href="#help"/></svg>

<!-- lower table -->
<div style="left:1px;top:915px;width:1398px;height:1px;background:#cfcfcf"></div>
<div style="left:1px;top:916px;width:1398px;height:88px;background:#fff"></div>
<div style="left:2px;top:916px;width:59px;height:9px;background:#dfdfdf"></div>
<div style="left:62px;top:916px;width:199px;height:9px;background:#e1e1e1"></div>
<div style="left:262px;top:916px;width:392px;height:9px;background:#e1e1e1"></div>
<div style="left:655px;top:916px;width:452px;height:9px;background:#e1e1e1"></div>
<div style="left:1108px;top:916px;width:272px;height:9px;background:#c6c6c6"></div>
<div style="left:2px;top:926px;width:59px;height:31px;background:#e4e4e4"></div>
<div style="left:62px;top:926px;width:199px;height:31px;background:#efefef"></div>
<div style="left:262px;top:926px;width:392px;height:31px;background:#efefef"></div>
<div style="left:655px;top:926px;width:452px;height:31px;background:#efefef"></div>
<div style="left:1108px;top:926px;width:272px;height:31px;background:#efefef"></div>
<div style="left:2px;top:957px;width:1378px;height:1px;background:#d0d0d0"></div>
<span class="t" style="left:2px;top:931px;width:59px;text-align:center;line-height:13px;white-space:normal;font-size:11px;letter-spacing:.07px">Config.<br>No.</span>
<span class="t" style="left:62px;top:931px;width:199px;text-align:center;line-height:13px;font-size:11px;letter-spacing:.4px">Surface Configuration<br>Name</span>
<span class="t" style="left:262px;top:926px;width:392px;text-align:center;line-height:16px;font-size:11px;letter-spacing:.35px">Assigned to<br>Surfaces No.</span>
<span class="t" style="left:655px;top:943px;width:452px;text-align:center;font-size:11px;letter-spacing:.5px">Options</span>
<span class="t" style="left:1108px;top:943px;width:272px;text-align:center;font-size:11px;letter-spacing:.07px">Comment</span>
<div style="left:2px;top:958px;width:59px;height:15px;background:#e6e6e6"></div>
<div style="left:2px;top:974px;width:59px;height:15px;background:#e6e6e6"></div>
<div style="left:2px;top:990px;width:59px;height:14px;background:#e6e6e6"></div>
<div style="left:1108px;top:974px;width:272px;height:30px;background:#f8f9f2"></div>
<div style="left:2px;top:973px;width:1378px;height:1px;background:#e2e2e2"></div>
<div style="left:2px;top:989px;width:1378px;height:1px;background:#e2e2e2"></div>
<div style="left:61px;top:916px;width:1px;height:88px;background:#e2e2e2"></div>
<div style="left:261px;top:916px;width:1px;height:88px;background:#e2e2e2"></div>
<div style="left:654px;top:916px;width:1px;height:88px;background:#e2e2e2"></div>
<div style="left:1107px;top:916px;width:1px;height:88px;background:#e2e2e2"></div>
<div style="left:1380px;top:916px;width:1px;height:88px;background:#e2e2e2"></div>
<span class="t" style="left:2px;top:959px;width:59px;text-align:center;font-size:11px">1</span>
<span class="t" style="left:2px;top:975px;width:59px;text-align:center;font-size:11px">2</span>
<span class="t" style="left:2px;top:990px;width:59px;text-align:center;font-size:11px">3</span>
<div style="left:66px;top:960px;width:11px;height:12px;background:#ccfeff"></div>
<span class="t" style="left:82px;top:960px;font-size:11px;letter-spacing:.3px">Standard</span>
<span class="t" style="left:266px;top:960px;font-size:11px">All</span>
<div style="left:1381px;top:916px;width:18px;height:88px;background:#f0f0f0"></div>
<div style="left:1382px;top:934px;width:15px;height:17px;background:#cdcdcd"></div>
<svg class="i" style="left:1385px;top:921px" width="9" height="6"><path d="M1 5l3.500-3.500L8 5" fill="none" stroke="#555" stroke-width="1.500"/></svg>
<svg class="i" style="left:1385px;top:992px" width="9" height="6"><path d="M1 1l3.500 3.500L8 1" fill="none" stroke="#555" stroke-width="1.500"/></svg>

<!-- tabs -->
<div style="left:1px;top:1004px;width:1398px;height:1px;background:#c9c9c9"></div>
<div style="left:1px;top:1005px;width:1398px;height:44px;background:#f5f5f5"></div>
<svg class="i" style="left:6px;top:1010px" width="120" height="8"><path d="M2 0h1v8H2zM8 0v8L3 4zM22 0v8l-5-4zM93 0v8l5-4zM108 0v8l5-4zM114 0h1v8h-1z" fill="#555"/></svg>
<span class="t" style="left:46px;top:1008px;font-size:11px;letter-spacing:.2px">8 of 10</span>
<div style="left:126px;top:1005px;width:1061px;height:1px;background:#d0d0d0"></div>
<div style="left:127px;top:1005px;width:107px;height:19px;background:#eee;border-bottom:1px solid #ccc"></div>
<div style="left:235px;top:1005px;width:161px;height:19px;background:#eee;border-bottom:1px solid #ccc"></div>
<div style="left:397px;top:1005px;width:191px;height:19px;background:#eee;border-bottom:1px solid #ccc"></div>
<div style="left:589px;top:1005px;width:61px;height:19px;background:#eee;border-bottom:1px solid #ccc"></div>
<div style="left:651px;top:1005px;width:60px;height:19px;background:#eee;border-bottom:1px solid #ccc"></div>
<div style="left:712px;top:1005px;width:77px;height:19px;background:#eee;border-bottom:1px solid #ccc"></div>
<div style="left:790px;top:1005px;width:137px;height:19px;background:#eee;border-bottom:1px solid #ccc"></div>
<div style="left:928px;top:1004px;width:135px;height:22px;background:#f8d0d0;border-bottom:1px solid #ccc"></div>
<div style="left:1064px;top:1005px;width:62px;height:19px;background:#eee;border-bottom:1px solid #ccc"></div>
<div style="left:1127px;top:1005px;width:60px;height:19px;background:#eee;border-bottom:1px solid #ccc"></div>
<span class="t" style="left:135px;top:1008px;font-size:11px;letter-spacing:.3px">Design Situations</span>
<span class="t" style="left:242px;top:1008px;font-size:11px;letter-spacing:.07px">Objects to Analyze - Stresses</span>
<span class="t" style="left:404px;top:1008px;font-size:11px;letter-spacing:.07px">Objects to Analyze - Stress Ranges</span>
<span class="t" style="left:596px;top:1008px;font-size:11px;letter-spacing:.3px">Materials</span>
<span class="t" style="left:660px;top:1008px;font-size:11px;letter-spacing:.07px">Sections</span>
<span class="t" style="left:720px;top:1008px;font-size:11px;letter-spacing:.07px">Thicknesses</span>
<span class="t" style="left:797px;top:1008px;font-size:11px;letter-spacing:.4px">Member Configurations</span>
<span class="t" style="left:936px;top:1009px;font-size:11px;letter-spacing:.3px">Surface Configurations</span>
<span class="t" style="left:1071px;top:1008px;font-size:11px;letter-spacing:.2px">Members</span>
<span class="t" style="left:1135px;top:1008px;font-size:11px;letter-spacing:.07px">Surfaces</span>

<!-- status -->
<div style="left:576px;top:1028px;width:36px;height:20px;background:#ececec;border:1px solid #ddd;box-sizing:border-box"></div>
<div style="left:649px;top:1028px;width:39px;height:20px;background:#ececec;border:1px solid #ddd;box-sizing:border-box"></div>
<div style="left:690px;top:1028px;width:45px;height:20px;background:#ececec;border:1px solid #ddd;box-sizing:border-box"></div>
<span class="t" style="left:580px;top:1033px;font-size:11px">SNAP</span>
<span class="t" style="left:617px;top:1033px;font-size:11px">GRID</span>
<span class="t" style="left:653px;top:1033px;font-size:11px">LGRID</span>
<span class="t" style="left:694px;top:1033px;font-size:11px">OSNAP</span>
<span class="t" style="left:740px;top:1033px;font-size:11px;letter-spacing:.3px">Visibility mode</span>
<span class="t" style="left:936px;top:1033px;font-size:11px;letter-spacing:.07px">CS: Global XYZ</span>
<span class="t" style="left:1091px;top:1033px;font-size:11px;letter-spacing:-.1px">Plane: XZ</span>
<span class="t" style="left:1157px;top:1033px;font-size:11px;letter-spacing:-.25px">X: 33.581 m</span>
<span class="t" style="left:1233px;top:1033px;font-size:11px;letter-spacing:-.3px">Y: 0.000 m</span>
<span class="t" style="left:1309px;top:1033px;font-size:11px;letter-spacing:-.2px">Z: 2.586 m</span>
<div class="sep" style="left:825px;top:1029px;height:18px;background:#ddd"></div>
<div class="sep" style="left:930px;top:1029px;height:18px;background:#ddd"></div>
<div class="sep" style="left:1086px;top:1029px;height:18px;background:#ddd"></div>
<div class="sep" style="left:1152px;top:1029px;height:18px;background:#ddd"></div>
<div class="sep" style="left:1228px;top:1029px;height:18px;background:#ddd"></div>
<div class="sep" style="left:1304px;top:1029px;height:18px;background:#ddd"></div>
<div class="sep" style="left:1380px;top:1029px;height:18px;background:#ddd"></div>
<svg class="i" style="left:1389px;top:1039px" width="9" height="9"><path d="M6 0h2v2H6zM3 3h2v2H3zM6 3h2v2H6zM0 6h2v2H0zM3 6h2v2H3zM6 6h2v2H6z" fill="#bbb"/></svg>
</div></body></html>
